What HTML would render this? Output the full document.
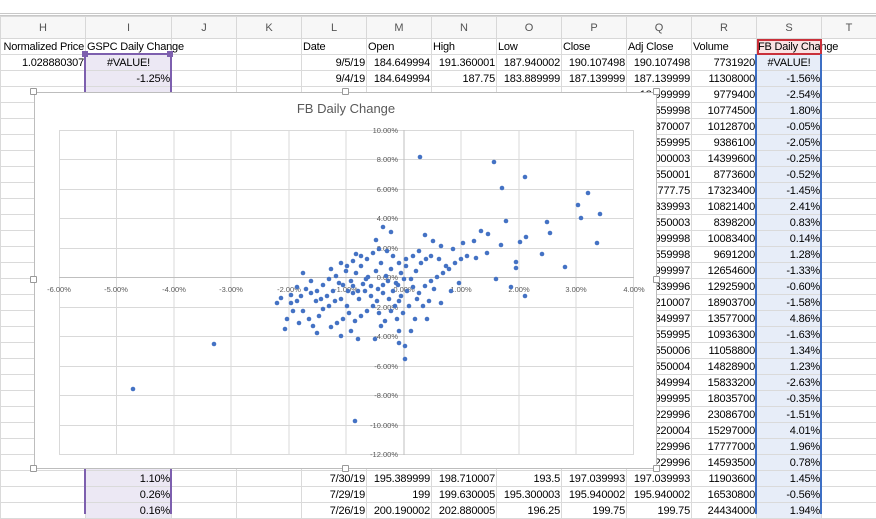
<!DOCTYPE html>
<html><head><meta charset="utf-8"><style>
*{margin:0;padding:0;box-sizing:border-box}
body{width:876px;height:514px;overflow:hidden;background:#fff;font-family:"Liberation Sans",sans-serif;font-size:11px;color:#000;position:relative}
#top{position:absolute;left:0;top:0;width:876px;height:16px;border-bottom:3px double #c8c8c8}
table{position:absolute;left:0;top:16px;width:876px;border-collapse:collapse;table-layout:fixed}
td{height:16px;border:1px solid #dadada;white-space:nowrap;overflow:hidden;padding:0 1px;text-align:right;line-height:14px;letter-spacing:-0.2px}
tr.h td{height:22px;text-align:center;color:#555;background:#f7f7f7;border-color:#d8d8d8;font-size:11px;letter-spacing:0}
td.l{text-align:left}
td.v{overflow:visible}
td.i{background:#ece8f4}
td.s{background:#e7edf8}
#chart{position:absolute;left:34px;top:92px;width:623px;height:377px;background:#fff;border:1px solid #bdbdbd}
.hd{position:absolute;width:7px;height:7px;background:#fff;border:1px solid #999;border-radius:1px}
</style></head><body>
<div id="top"></div>
<table>
<colgroup><col style="width:85px"><col style="width:86px"><col style="width:65px"><col style="width:65px"><col style="width:65px"><col style="width:65px"><col style="width:65px"><col style="width:65px"><col style="width:65px"><col style="width:65px"><col style="width:65px"><col style="width:65px"><col style="width:55px"></colgroup>
<tr class="h"><td>H</td><td>I</td><td>J</td><td>K</td><td>L</td><td>M</td><td>N</td><td>O</td><td>P</td><td>Q</td><td>R</td><td>S</td><td>T</td></tr>
<tr><td>Normalized Price</td><td class="l v">GSPC Daily Change</td><td></td><td></td><td class="l">Date</td><td class="l">Open</td><td class="l">High</td><td class="l">Low</td><td class="l">Close</td><td class="l">Adj Close</td><td class="l">Volume</td><td class="l v" style="background:#f9e3e3;outline:2px solid #c9303a;outline-offset:-2px">FB Daily Change</td><td></td></tr>
<tr><td>1.028880307</td><td class="i" style="text-align:center">#VALUE!</td><td></td><td></td><td>9/5/19</td><td>184.649994</td><td>191.360001</td><td>187.940002</td><td>190.107498</td><td>190.107498</td><td>7731920</td><td class="s" style="text-align:center">#VALUE!</td><td></td></tr>
<tr><td></td><td class="i">-1.25%</td><td></td><td></td><td>9/4/19</td><td>184.649994</td><td>187.75</td><td>183.889999</td><td>187.139999</td><td>187.139999</td><td>11308000</td><td class="s">-1.56%</td><td></td></tr>
<tr><td></td><td class="i"></td><td></td><td></td><td></td><td></td><td></td><td></td><td></td><td>18.999999</td><td>9779400</td><td class="s">-2.54%</td><td></td></tr>
<tr><td></td><td class="i"></td><td></td><td></td><td></td><td></td><td></td><td></td><td></td><td>18.559998</td><td>10774500</td><td class="s">1.80%</td><td></td></tr>
<tr><td></td><td class="i"></td><td></td><td></td><td></td><td></td><td></td><td></td><td></td><td>18.370007</td><td>10128700</td><td class="s">-0.05%</td><td></td></tr>
<tr><td></td><td class="i"></td><td></td><td></td><td></td><td></td><td></td><td></td><td></td><td>18.559995</td><td>9386100</td><td class="s">-2.05%</td><td></td></tr>
<tr><td></td><td class="i"></td><td></td><td></td><td></td><td></td><td></td><td></td><td></td><td>18.000003</td><td>14399600</td><td class="s">-0.25%</td><td></td></tr>
<tr><td></td><td class="i"></td><td></td><td></td><td></td><td></td><td></td><td></td><td></td><td>18.550001</td><td>8773600</td><td class="s">-0.52%</td><td></td></tr>
<tr><td></td><td class="i"></td><td></td><td></td><td></td><td></td><td></td><td></td><td></td><td>1777.75</td><td>17323400</td><td class="s">-1.45%</td><td></td></tr>
<tr><td></td><td class="i"></td><td></td><td></td><td></td><td></td><td></td><td></td><td></td><td>18.339993</td><td>10821400</td><td class="s">2.41%</td><td></td></tr>
<tr><td></td><td class="i"></td><td></td><td></td><td></td><td></td><td></td><td></td><td></td><td>18.550003</td><td>8398200</td><td class="s">0.83%</td><td></td></tr>
<tr><td></td><td class="i"></td><td></td><td></td><td></td><td></td><td></td><td></td><td></td><td>18.999998</td><td>10083400</td><td class="s">0.14%</td><td></td></tr>
<tr><td></td><td class="i"></td><td></td><td></td><td></td><td></td><td></td><td></td><td></td><td>18.559998</td><td>9691200</td><td class="s">1.28%</td><td></td></tr>
<tr><td></td><td class="i"></td><td></td><td></td><td></td><td></td><td></td><td></td><td></td><td>18.999997</td><td>12654600</td><td class="s">-1.33%</td><td></td></tr>
<tr><td></td><td class="i"></td><td></td><td></td><td></td><td></td><td></td><td></td><td></td><td>18.339996</td><td>12925900</td><td class="s">-0.60%</td><td></td></tr>
<tr><td></td><td class="i"></td><td></td><td></td><td></td><td></td><td></td><td></td><td></td><td>18.210007</td><td>18903700</td><td class="s">-1.58%</td><td></td></tr>
<tr><td></td><td class="i"></td><td></td><td></td><td></td><td></td><td></td><td></td><td></td><td>18.349997</td><td>13577000</td><td class="s">4.86%</td><td></td></tr>
<tr><td></td><td class="i"></td><td></td><td></td><td></td><td></td><td></td><td></td><td></td><td>18.559995</td><td>10936300</td><td class="s">-1.63%</td><td></td></tr>
<tr><td></td><td class="i"></td><td></td><td></td><td></td><td></td><td></td><td></td><td></td><td>18.550006</td><td>11058800</td><td class="s">1.34%</td><td></td></tr>
<tr><td></td><td class="i"></td><td></td><td></td><td></td><td></td><td></td><td></td><td></td><td>18.550004</td><td>14828900</td><td class="s">1.23%</td><td></td></tr>
<tr><td></td><td class="i"></td><td></td><td></td><td></td><td></td><td></td><td></td><td></td><td>18.349994</td><td>15833200</td><td class="s">-2.63%</td><td></td></tr>
<tr><td></td><td class="i"></td><td></td><td></td><td></td><td></td><td></td><td></td><td></td><td>18.999995</td><td>18035700</td><td class="s">-0.35%</td><td></td></tr>
<tr><td></td><td class="i"></td><td></td><td></td><td></td><td></td><td></td><td></td><td></td><td>18.229996</td><td>23086700</td><td class="s">-1.51%</td><td></td></tr>
<tr><td></td><td class="i"></td><td></td><td></td><td></td><td></td><td></td><td></td><td></td><td>18.220004</td><td>15297000</td><td class="s">4.01%</td><td></td></tr>
<tr><td></td><td class="i"></td><td></td><td></td><td></td><td></td><td></td><td></td><td></td><td>18.229996</td><td>17777000</td><td class="s">1.96%</td><td></td></tr>
<tr><td></td><td class="i"></td><td></td><td></td><td></td><td></td><td></td><td></td><td></td><td>18.229996</td><td>14593500</td><td class="s">0.78%</td><td></td></tr>
<tr><td></td><td class="i">1.10%</td><td></td><td></td><td>7/30/19</td><td>195.389999</td><td>198.710007</td><td>193.5</td><td>197.039993</td><td>197.039993</td><td>11903600</td><td class="s">1.45%</td><td></td></tr>
<tr><td></td><td class="i">0.26%</td><td></td><td></td><td>7/29/19</td><td>199</td><td>199.630005</td><td>195.300003</td><td>195.940002</td><td>195.940002</td><td>16530800</td><td class="s">-0.56%</td><td></td></tr>
<tr><td></td><td class="i">0.16%</td><td></td><td></td><td>7/26/19</td><td>200.190002</td><td>202.880005</td><td>196.25</td><td>199.75</td><td>199.75</td><td>24434000</td><td class="s">1.94%</td><td></td></tr>
</table>
<div style="position:absolute;left:84px;top:54px;width:2px;height:460px;background:#7d5fae"></div>
<div style="position:absolute;left:170px;top:54px;width:2px;height:460px;background:#7d5fae"></div>
<div style="position:absolute;left:82px;top:51px;width:6px;height:6px;background:#7d5fae"></div>
<div style="position:absolute;left:167px;top:51px;width:6px;height:6px;background:#7d5fae"></div>
<div style="position:absolute;left:85px;top:53px;width:86px;height:2px;background:#7d5fae"></div>
<div style="position:absolute;left:755px;top:54px;width:2px;height:460px;background:#3d6fc4"></div>
<div style="position:absolute;left:820px;top:54px;width:2px;height:460px;background:#3d6fc4"></div>

<div id="chart">
<svg width="623" height="377" style="position:absolute;left:-1px;top:-1px" font-family="Liberation Sans,sans-serif">
<text x="312" y="21" text-anchor="middle" font-size="13" fill="#595959">FB Daily Change</text>
<g stroke="#d9d9d9" stroke-width="1">
<line x1="25.5" y1="38" x2="25.5" y2="363"/><line x1="82.5" y1="38" x2="82.5" y2="363"/><line x1="140" y1="38" x2="140" y2="363"/><line x1="197" y1="38" x2="197" y2="363"/><line x1="255" y1="38" x2="255" y2="363"/><line x1="312" y1="38" x2="312" y2="363"/><line x1="427" y1="38" x2="427" y2="363"/><line x1="485" y1="38" x2="485" y2="363"/><line x1="542" y1="38" x2="542" y2="363"/><line x1="599.5" y1="38" x2="599.5" y2="363"/>
<line x1="25" y1="38.5" x2="600" y2="38.5"/><line x1="25" y1="67.5" x2="600" y2="67.5"/><line x1="25" y1="97.5" x2="600" y2="97.5"/><line x1="25" y1="126.5" x2="600" y2="126.5"/><line x1="25" y1="156.5" x2="600" y2="156.5"/><line x1="25" y1="215.5" x2="600" y2="215.5"/><line x1="25" y1="244.5" x2="600" y2="244.5"/><line x1="25" y1="274.5" x2="600" y2="274.5"/><line x1="25" y1="303.5" x2="600" y2="303.5"/><line x1="25" y1="333.5" x2="600" y2="333.5"/><line x1="25" y1="362.5" x2="600" y2="362.5"/>
</g>
<g stroke="#bfbfbf"><line x1="25" y1="185.5" x2="600" y2="185.5"/><line x1="370" y1="38" x2="370" y2="363"/></g>
<g font-size="7.5" fill="#595959" text-anchor="end">
<text x="364" y="41">10.00%</text><text x="364" y="70">8.00%</text><text x="364" y="100">6.00%</text><text x="364" y="129">4.00%</text><text x="364" y="159">2.00%</text><text x="364" y="188">0.00%</text><text x="364" y="218">-2.00%</text><text x="364" y="247">-4.00%</text><text x="364" y="277">-6.00%</text><text x="364" y="306">-8.00%</text><text x="364" y="336">-10.00%</text><text x="364" y="365">-12.00%</text>
</g>
<g font-size="7.5" fill="#595959" text-anchor="middle">
<text x="25" y="200">-6.00%</text><text x="82" y="200">-5.00%</text><text x="140" y="200">-4.00%</text><text x="197" y="200">-3.00%</text><text x="255" y="200">-2.00%</text><text x="312" y="200">-1.00%</text><text x="370" y="200">0.00%</text><text x="427" y="200">1.00%</text><text x="485" y="200">2.00%</text><text x="542" y="200">3.00%</text><text x="600" y="200">4.00%</text>
</g>
<g fill="#4472c4" transform="translate(-33,-91)">
<circle cx="419" cy="156" r="2.3"/><circle cx="493" cy="161" r="2.3"/><circle cx="524" cy="176" r="2.3"/><circle cx="501" cy="187" r="2.3"/><circle cx="587" cy="192" r="2.3"/><circle cx="577" cy="204" r="2.3"/><circle cx="599" cy="213" r="2.3"/><circle cx="580" cy="217" r="2.3"/><circle cx="505" cy="220" r="2.3"/><circle cx="546" cy="221" r="2.3"/><circle cx="549" cy="232" r="2.3"/><circle cx="525" cy="236" r="2.3"/><circle cx="519" cy="241" r="2.3"/><circle cx="480" cy="230" r="2.3"/><circle cx="487" cy="233" r="2.3"/><circle cx="473" cy="240" r="2.3"/><circle cx="596" cy="242" r="2.3"/><circle cx="500" cy="244" r="2.3"/><circle cx="486" cy="252" r="2.3"/><circle cx="466" cy="255" r="2.3"/><circle cx="475" cy="257" r="2.3"/><circle cx="541" cy="253" r="2.3"/><circle cx="564" cy="266" r="2.3"/><circle cx="515" cy="261" r="2.3"/><circle cx="515" cy="267" r="2.3"/><circle cx="495" cy="278" r="2.3"/><circle cx="510" cy="286" r="2.3"/><circle cx="524" cy="295" r="2.3"/><circle cx="382" cy="226" r="2.3"/><circle cx="390" cy="231" r="2.3"/><circle cx="424" cy="234" r="2.3"/><circle cx="375" cy="239" r="2.3"/><circle cx="355" cy="253" r="2.3"/>
<circle cx="132" cy="388" r="2.3"/><circle cx="213" cy="343" r="2.3"/><circle cx="354" cy="420" r="2.3"/><circle cx="404" cy="358" r="2.3"/><circle cx="398" cy="342" r="2.3"/>
<circle cx="330" cy="268" r="2.3"/><circle cx="335" cy="275" r="2.3"/><circle cx="340" cy="262" r="2.3"/><circle cx="345" cy="270" r="2.3"/><circle cx="350" cy="280" r="2.3"/><circle cx="355" cy="272" r="2.3"/><circle cx="360" cy="265" r="2.3"/><circle cx="365" cy="278" r="2.3"/><circle cx="370" cy="285" r="2.3"/><circle cx="375" cy="270" r="2.3"/><circle cx="380" cy="262" r="2.3"/><circle cx="385" cy="275" r="2.3"/><circle cx="390" cy="268" r="2.3"/><circle cx="395" cy="282" r="2.3"/><circle cx="400" cy="272" r="2.3"/><circle cx="405" cy="265" r="2.3"/><circle cx="410" cy="278" r="2.3"/><circle cx="415" cy="270" r="2.3"/><circle cx="420" cy="262" r="2.3"/><circle cx="425" cy="258" r="2.3"/><circle cx="430" cy="255" r="2.3"/><circle cx="418" cy="250" r="2.3"/><circle cx="412" cy="255" r="2.3"/><circle cx="405" cy="258" r="2.3"/><circle cx="398" cy="262" r="2.3"/><circle cx="392" cy="255" r="2.3"/><circle cx="386" cy="250" r="2.3"/><circle cx="378" cy="248" r="2.3"/><circle cx="372" cy="252" r="2.3"/><circle cx="366" cy="258" r="2.3"/><circle cx="360" cy="255" r="2.3"/><circle cx="352" cy="260" r="2.3"/><circle cx="346" cy="265" r="2.3"/><circle cx="338" cy="282" r="2.3"/><circle cx="332" cy="290" r="2.3"/><circle cx="326" cy="295" r="2.3"/><circle cx="320" cy="298" r="2.3"/><circle cx="315" cy="300" r="2.3"/><circle cx="310" cy="292" r="2.3"/><circle cx="305" cy="288" r="2.3"/><circle cx="300" cy="295" r="2.3"/><circle cx="296" cy="300" r="2.3"/><circle cx="290" cy="302" r="2.3"/><circle cx="286" cy="318" r="2.3"/><circle cx="292" cy="310" r="2.3"/><circle cx="298" cy="322" r="2.3"/><circle cx="302" cy="310" r="2.3"/><circle cx="308" cy="318" r="2.3"/><circle cx="312" cy="325" r="2.3"/><circle cx="318" cy="315" r="2.3"/><circle cx="322" cy="308" r="2.3"/><circle cx="328" cy="305" r="2.3"/><circle cx="334" cy="300" r="2.3"/><circle cx="340" cy="298" r="2.3"/><circle cx="346" cy="305" r="2.3"/><circle cx="352" cy="292" r="2.3"/><circle cx="358" cy="298" r="2.3"/><circle cx="364" cy="290" r="2.3"/><circle cx="370" cy="295" r="2.3"/><circle cx="376" cy="300" r="2.3"/><circle cx="382" cy="292" r="2.3"/><circle cx="388" cy="298" r="2.3"/><circle cx="394" cy="305" r="2.3"/><circle cx="400" cy="295" r="2.3"/><circle cx="406" cy="290" r="2.3"/><circle cx="412" cy="286" r="2.3"/><circle cx="418" cy="292" r="2.3"/><circle cx="424" cy="285" r="2.3"/><circle cx="430" cy="280" r="2.3"/><circle cx="436" cy="276" r="2.3"/><circle cx="442" cy="272" r="2.3"/><circle cx="448" cy="268" r="2.3"/><circle cx="454" cy="262" r="2.3"/><circle cx="460" cy="258" r="2.3"/><circle cx="445" cy="265" r="2.3"/><circle cx="438" cy="258" r="2.3"/><circle cx="433" cy="288" r="2.3"/><circle cx="428" cy="300" r="2.3"/><circle cx="422" cy="305" r="2.3"/><circle cx="416" cy="298" r="2.3"/><circle cx="408" cy="305" r="2.3"/><circle cx="402" cy="312" r="2.3"/><circle cx="396" cy="318" r="2.3"/><circle cx="390" cy="310" r="2.3"/><circle cx="384" cy="320" r="2.3"/><circle cx="378" cy="312" r="2.3"/><circle cx="372" cy="305" r="2.3"/><circle cx="366" cy="310" r="2.3"/><circle cx="360" cy="315" r="2.3"/><circle cx="354" cy="320" r="2.3"/><circle cx="348" cy="312" r="2.3"/><circle cx="342" cy="318" r="2.3"/><circle cx="336" cy="322" r="2.3"/><circle cx="330" cy="326" r="2.3"/><circle cx="316" cy="332" r="2.3"/><circle cx="340" cy="335" r="2.3"/><circle cx="350" cy="330" r="2.3"/><circle cx="357" cy="338" r="2.3"/><circle cx="380" cy="325" r="2.3"/><circle cx="398" cy="300" r="2.3"/><circle cx="403" cy="278" r="2.3"/><circle cx="397" cy="284" r="2.3"/><circle cx="392" cy="290" r="2.3"/><circle cx="387" cy="280" r="2.3"/><circle cx="382" cy="284" r="2.3"/><circle cx="377" cy="288" r="2.3"/><circle cx="367" cy="276" r="2.3"/><circle cx="362" cy="283" r="2.3"/><circle cx="357" cy="290" r="2.3"/><circle cx="352" cy="285" r="2.3"/><circle cx="347" cy="290" r="2.3"/><circle cx="342" cy="284" r="2.3"/><circle cx="328" cy="278" r="2.3"/><circle cx="322" cy="284" r="2.3"/><circle cx="316" cy="290" r="2.3"/><circle cx="310" cy="280" r="2.3"/><circle cx="302" cy="272" r="2.3"/><circle cx="296" cy="286" r="2.3"/><circle cx="290" cy="294" r="2.3"/><circle cx="280" cy="297" r="2.3"/><circle cx="276" cy="302" r="2.3"/><circle cx="284" cy="328" r="2.3"/><circle cx="374" cy="338" r="2.3"/><circle cx="404" cy="345" r="2.3"/><circle cx="398" cy="330" r="2.3"/><circle cx="410" cy="330" r="2.3"/><circle cx="414" cy="318" r="2.3"/><circle cx="426" cy="318" r="2.3"/><circle cx="440" cy="302" r="2.3"/><circle cx="450" cy="290" r="2.3"/><circle cx="458" cy="282" r="2.3"/><circle cx="452" cy="248" r="2.3"/><circle cx="440" cy="245" r="2.3"/><circle cx="432" cy="240" r="2.3"/><circle cx="462" cy="242" r="2.3"/>
</g>
</svg>
</div>
<div class="hd" style="left:30px;top:88px"></div><div class="hd" style="left:342px;top:88px"></div><div class="hd" style="left:653px;top:88px"></div>
<div class="hd" style="left:30px;top:276px"></div><div class="hd" style="left:653px;top:276px"></div>
<div class="hd" style="left:30px;top:465px"></div><div class="hd" style="left:342px;top:465px"></div><div class="hd" style="left:653px;top:465px"></div>
</body></html>
